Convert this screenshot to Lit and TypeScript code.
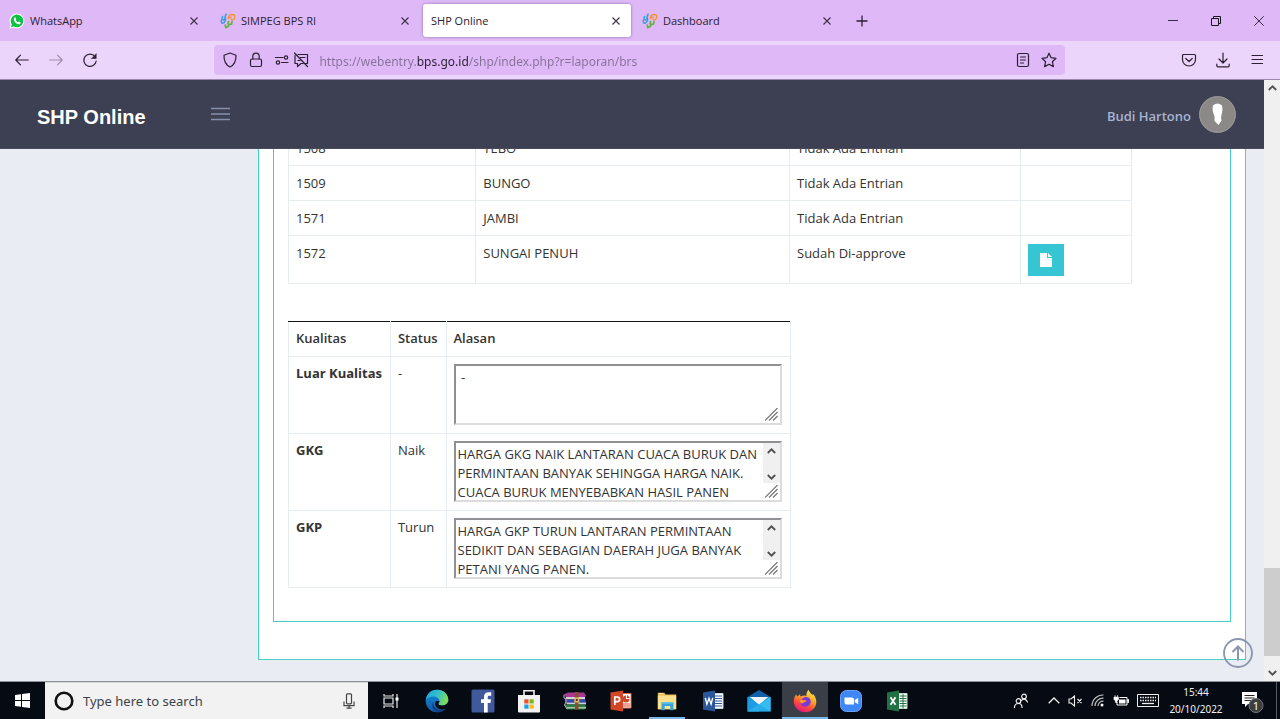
import { LitElement, html, css, svg, nothing } from "lit";
import { customElement } from "lit/decorators.js";
import { classMap } from "lit/directives/class-map.js";

const bpsIcon = html`<svg class="fav" viewBox="0 0 16 16" aria-hidden="true" fill="none" stroke-linecap="round">
  <path d="M2.600 3.500L1.200 8.500Q1.500 11 3.800 9.800Q6 8 5.500 5.500" stroke="#2f9fe0" stroke-width="1.500"/>
  <path d="M5 4.500L6 1.200M3.500 7L5 6" stroke="#2f9fe0" stroke-width="1.600"/>
  <path d="M8.500 5.500L9.300 2.300Q12 .8 14.200 2Q15.500 4 13.800 6.300Q12 8 11 6" stroke="#f5943a" stroke-width="1.500"/>
  <path d="M8.500 4Q10 5 11.500 4" stroke="#f5943a" stroke-width="1.300"/>
  <path d="M5.200 12L5.800 14.600L8 13.500L9.500 11.500L11.500 11L12 8.500M8.500 8.500L8 11" stroke="#62b33e" stroke-width="1.700"/>
</svg>`;

const whatsIcon = html`<svg class="fav" viewBox="0 0 16 16" aria-hidden="true">
  <path d="M8 .5a7.400 7.400 0 1 1-3.500 14L.6 15.600l1.100-3.900A7.400 7.400 0 0 1 8 .5z" fill="#fff"/>
  <path d="M8 1.500a6.400 6.400 0 1 1-3.200 12L2 14.200l.8-2.800A6.400 6.400 0 0 1 8 1.500z" fill="#0dc143"/>
  <path d="M5.600 4.500c.5-.3.900-.1 1.100.4l.5 1.200c0 .4-.6.700-.6 1 .5 1 1.200 1.700 2.300 2.200.4 0 .7-.8 1.100-.8l1.500.8c.3.400 0 1.300-.5 1.600-1.200.8-3 .1-4.400-1.200C5 8.200 4 6 5.600 4.500z" fill="#fff"/>
</svg>`;

const closeIcon = html`<svg width="8" height="8" viewBox="0 0 8 8" aria-hidden="true"><path d="M.5.5l7 7M7.500.5l-7 7" stroke="#3c3046" stroke-width="1.100"/></svg>`;

const line = (body: unknown, size = 16, cls = "") => html`<svg class=${cls} width=${size} height=${size} viewBox="0 0 16 16" fill="none"
  stroke="currentColor" stroke-width="1.200" stroke-linecap="round" stroke-linejoin="round" aria-hidden="true">${body}</svg>`;

const app24 = (body: unknown) => html`<svg width="24" height="24" viewBox="0 0 24 24" aria-hidden="true">${body}</svg>`;

const arrowUp = html`<svg width="9" height="6" viewBox="0 0 9 6" aria-hidden="true"><path d="M.8 5L4.500 1.300 8.200 5" fill="none" stroke="#505050" stroke-width="1.800"/></svg>`;
const arrowDown = html`<svg width="9" height="6" viewBox="0 0 9 6" aria-hidden="true"><path d="M.8 1L4.500 4.700 8.200 1" fill="none" stroke="#505050" stroke-width="1.800"/></svg>`;

@customElement("browser-bar")
export class BrowserBar extends LitElement {
  static styles = css`
    :host { display: block; font: 12px "Noto Sans", sans-serif; color: #2b2033; }
    button { border: 0; background: none; padding: 0; color: inherit; display: grid; place-items: center; font: inherit; }
    svg { display: block; }
    .strip { display: flex; height: 41px; background: #dfb9f7; }
    .tab { flex: 0 1 211px; min-width: 0; box-sizing: border-box; display: flex; align-items: center; gap: 5px; padding: 0 13px 0 9px; }
    .tab a { flex: 1; min-width: 0; color: inherit; text-decoration: none; display: flex; align-items: center; gap: 5px; white-space: nowrap; overflow: hidden; font: 11px "Open Sans", sans-serif; }
    .fav { width: 16px; height: 16px; flex: none; }
    .tab button { width: 9px; height: 16px; }
    .active { flex-basis: 208px; margin: 4px 2px 4px 1px; padding: 0 11px 0 8px; background: #fff; border-radius: 3px; box-shadow: 0 0 3px #8d6fa3; }
    .plus { width: 34px; margin-left: 1px; }
    .window { margin-left: auto; display: flex; }
    .window button { width: 43px; }
    .tools { display: flex; align-items: center; height: 39px; padding: 0 11px 0 10px; gap: 10px; background: #ecd5fa; border-bottom: 1px solid #9b86ad; box-sizing: border-box; }
    .tools > button { width: 24px; height: 24px; flex: none; }
    .dim { color: #a08cae; }
    .gap { flex: 94 1 0; }
    .url { flex: 848 1 0; display: flex; align-items: center; height: 30px; border-radius: 4px; background: #dfb9f7; padding: 0 8px; box-sizing: border-box; }
    .url button { width: 16px; height: 20px; flex: none; }
    .lock { margin-left: 10px; }
    .perm { margin-left: 10px; }
    .chat { margin-left: 3px; }
    .star { margin-left: 10px; }
    input { flex: 1; min-width: 0; border: 0; outline: 0; padding: 2px 0 0; margin: 0 10px; height: 20px; box-sizing: border-box; font: 12px "Noto Sans", sans-serif; color: #2b2033;
      background: linear-gradient(to right, #86709a 98px, #2b2033 98px 150px, #86709a 150px);
      -webkit-background-clip: text; background-clip: text; -webkit-text-fill-color: transparent; }
  `;
  tab(label: string, icon: unknown, active = false) {
    return html`<div class=${classMap({ tab: true, active })}>
      <a href="#">${icon}<span>${label}</span></a>
      <button aria-label="Close ${label}">${closeIcon}</button>
    </div>`;
  }
  render() {
    return html`
      <div class="strip">
        ${this.tab("WhatsApp", whatsIcon)} ${this.tab("SIMPEG BPS RI", bpsIcon)}
        ${this.tab("SHP Online", nothing, true)} ${this.tab("Dashboard", bpsIcon)}
        <button class="plus" aria-label="New tab"><svg width="12" height="12" viewBox="0 0 12 12"><path d="M6 .5v11M.5 6h11" stroke="#2b2033" stroke-width="1.300"/></svg></button>
        <div class="window">
          <button aria-label="Minimize"><svg width="10" height="10" viewBox="0 0 10 10"><path d="M0 4.500h10" stroke="#3a2c45"/></svg></button>
          <button aria-label="Restore"><svg width="10" height="10" viewBox="0 0 10 10" fill="none" stroke="#1c1422"><path d="M.5 2.500h7v7h-7zM2.500 2.500v-2h7v7h-2"/></svg></button>
          <button aria-label="Close"><svg width="10" height="10" viewBox="0 0 10 10"><path d="M.3.3l9.400 9.400M9.700.3L.3 9.700" stroke="#3a2c45"/></svg></button>
        </div>
      </div>
      <div class="tools">
        <button aria-label="Back">${line(svg`<path d="M14.200 8H2M6.500 3.200L1.800 8l4.700 4.800"/>`)}</button>
        <button class="dim" aria-label="Forward">${line(svg`<path d="M1.800 8H14M9.500 3.200L14.200 8l-4.700 4.800"/>`)}</button>
        <button aria-label="Reload">${line(svg`<path d="M13 4.500A6.200 6.200 0 1 0 14.200 9"/><path d="M14.200 2v4.500H9.700z" fill="currentColor" stroke-width=".6"/>`)}</button>
        <span class="gap"></span>
        <div class="url">
          <button aria-label="Tracking protection">${line(svg`<path d="M8 1L14 3.200C14.200 9 12 13 8 15C4 13 1.800 9 2 3.200z"/>`)}</button>
          <button class="lock" aria-label="Site information">${line(svg`<rect x="2.500" y="7" width="11" height="7.500" rx="1.500"/><path d="M4.800 7V4.300a3.200 3.200 0 0 1 6.400 0V7"/>`)}</button>
          <button class="perm" aria-label="Permissions">${line(svg`<path d="M1.500 5.500H9M7.500 10.500H14"/><circle cx="12" cy="5.500" r="1.700"/><circle cx="4" cy="10.500" r="1.700"/>`)}</button>
          <button class="chat" aria-label="Notifications blocked">${line(svg`<path d="M5 2.500H14.500V11.500H12.500M10 11.500H8L4.500 14.500V11.500H2V3.500M7.500 5.500H12M5 8.500H7M1.500 1L14.500 14.500"/>`)}</button>
          <input aria-label="Address" value="https://webentry.bps.go.id/shp/index.php?r=laporan/brs">
          <button aria-label="Reader view">${line(svg`<rect x="2.500" y="1.500" width="11" height="13" rx="1.500"/><path d="M5.500 5h5M5.500 8h5M5.500 11h3"/>`)}</button>
          <button class="star" aria-label="Bookmark">${line(svg`<path d="M8 1.200l2.100 4.500 4.900.6-3.600 3.400 1 4.900L8 12.200l-4.400 2.400 1-4.900L1 6.300l4.900-.6z"/>`)}</button>
        </div>
        <span class="gap"></span>
        <button aria-label="Pocket">${line(svg`<path d="M2.500 2.500h11a1 1 0 0 1 1 1V7.500a6.500 6.500 0 0 1-13 0V3.500a1 1 0 0 1 1-1zM4.800 6.500L8 9.500l3.200-3"/>`)}</button>
        <button aria-label="Downloads">${line(svg`<path d="M8 1v9.500M4 7l4 4 4-4M1.800 12v1.500a1.300 1.300 0 0 0 1.300 1.300h9.800a1.300 1.300 0 0 0 1.300-1.300V12"/>`)}</button>
        <button aria-label="Menu">${line(svg`<path d="M3 3.500h10.500M3 7.500h10.500M3 11.500h10.500"/>`)}</button>
      </div>`;
  }
}

interface Region { code: string; name: string; status: string; file?: boolean; }
interface Quality { name: string; status: string; reason: string; scroll: boolean; }

const regions: Region[] = [
  { code: "1508", name: "TEBO", status: "Tidak Ada Entrian" },
  { code: "1509", name: "BUNGO", status: "Tidak Ada Entrian" },
  { code: "1571", name: "JAMBI", status: "Tidak Ada Entrian" },
  { code: "1572", name: "SUNGAI PENUH", status: "Sudah Di-approve", file: true },
];

const qualities: Quality[] = [
  { name: "Luar Kualitas", status: "-", reason: " -", scroll: false },
  { name: "GKG", status: "Naik", reason: "HARGA GKG NAIK LANTARAN CUACA BURUK DAN PERMINTAAN BANYAK SEHINGGA HARGA NAIK. CUACA BURUK MENYEBABKAN HASIL PANEN", scroll: true },
  { name: "GKP", status: "Turun", reason: "HARGA GKP TURUN LANTARAN PERMINTAAN SEDIKIT DAN SEBAGIAN DAERAH JUGA BANYAK PETANI YANG PANEN.", scroll: true },
];

@customElement("shp-page")
export class ShpPage extends LitElement {
  static styles = css`
    :host { display: flex; min-height: 0; background: #e9ecf3; font: 13px/19px "Open Sans", sans-serif; color: #333; }
    svg { display: block; }
    button { border: 0; padding: 0; display: grid; place-items: center; background: none; }
    .page { flex: 1; min-width: 0; display: flex; flex-direction: column; position: relative; }
    .head { flex: none; height: 69px; box-sizing: border-box; display: flex; align-items: center; padding: 0 28px 0 37px; background: #3d3f52; border-bottom: 1px solid #4a4b5a; }
    .brand { width: 174px; color: #fff; text-decoration: none; font: bold 20px/24px "Liberation Sans", sans-serif; padding-top: 6px; box-sizing: border-box; }
    .user { margin-left: auto; display: flex; align-items: center; gap: 8px; color: #a9b3cf; text-decoration: none; font-weight: 600; }
    .name { padding-top: 4px; }
    .main { flex: 1; min-height: 0; overflow: hidden; display: flex; flex-direction: column; justify-content: flex-end; padding: 0 18px 21px 258px; }
    .outer { flex: none; background: #fff; border: 1px solid #44d0c3; padding: 14px 14px 37px; }
    .inner { border: 1px solid #44d0c3; padding: 14px 14px 33px; }
    table { border-collapse: collapse; }
    td, th { border: 1px solid #e7ecf1; padding: 7px 8px 8px 7px; text-align: left; vertical-align: top; }
    .regions { width: 91%; table-layout: fixed; margin-bottom: 37px; }
    .regions td { padding: 8px 7px 7px; }
    .c1 { width: 22.2%; }
    .c2 { width: 37.2%; }
    .c3 { width: 27.4%; }
    .file { width: 36px; height: 32px; background: #36c6d3; }
    .reasons thead th { border-top-color: #111; font-weight: 600; }
    .box { display: flex; width: 328px; height: 61px; box-sizing: border-box; border: 2px solid; border-color: #8f8f94 #dcdcdc #dcdcdc #8f8f94; }
    textarea { flex: 1; min-width: 0; border: 0; outline: 0; padding: 2px 0 0 2px; resize: none; overflow: hidden; background: none; font: inherit; color: #333; }
    .rail { width: 17px; display: flex; flex-direction: column; justify-content: flex-end; }
    .track { flex: 1; background: #f0f0f0; display: flex; flex-direction: column; justify-content: space-between; align-items: center; padding: 5px 0 3px; }
    .grip { height: 17px; display: grid; place-items: center; }
    .top { position: absolute; right: 11px; bottom: 13px; }
    .bar { flex: none; width: 16px; background: #f0f0f0; display: flex; flex-direction: column; align-items: center; }
    .bar button { height: 16px; width: 16px; }
    .before { flex: 472; }
    .thumb { flex: 88; width: 16px; background: #cdcdcd; }
    .after { flex: 9; }
  `;
  render() {
    return html`
      <div class="page">
        <header class="head">
          <a class="brand" href="#">SHP Online</a>
          <button aria-label="Toggle menu"><svg width="19" height="14" viewBox="0 0 19 14"><path d="M0 1.500h19M0 7h19M0 12.500h19" stroke="#8790aa" stroke-width="1.500"/></svg></button>
          <a class="user" href="#"><span class="name">Budi Hartono</span>
            <svg width="37" height="37" viewBox="0 0 37 37" aria-hidden="true"><circle cx="18.500" cy="18.500" r="18.300" fill="#8a8987"/><circle cx="18.500" cy="18.500" r="17.800" fill="none" stroke="#9b9a99"/>
              <path d="M14 9.500Q18.500 5.500 23 9.500Q24.300 14 22.500 19L22 22L22.600 24.500L19.500 29L15.500 25L15.600 20.500Q12.700 14 14 9.500z" fill="#fff"/></svg>
          </a>
        </header>
        <main class="main">
          <section class="outer"><div class="inner">
            <table class="regions">
              <colgroup><col class="c1"><col class="c2"><col class="c3"><col></colgroup>
              <tbody>${regions.map((r) => html`<tr><td>${r.code}</td><td>${r.name}</td><td>${r.status}</td><td>${r.file
                ? html`<button class="file" aria-label="Open file"><svg width="12" height="14" viewBox="0 0 12 14"><path d="M0 0H7V5H12V14H0zM8 0L12 4H8z" fill="#fff"/></svg></button>` : nothing}</td></tr>`)}</tbody>
            </table>
            <table class="reasons">
              <thead><tr><th>Kualitas</th><th>Status</th><th>Alasan</th></tr></thead>
              <tbody>${qualities.map((q) => html`<tr><th>${q.name}</th><td>${q.status}</td><td>
                <div class="box">
                  <textarea aria-label="Alasan ${q.name}" .value=${q.reason}></textarea>
                  <div class="rail">
                    ${q.scroll ? html`<div class="track">${arrowUp}${arrowDown}</div>` : nothing}
                    <div class="grip"><svg width="13" height="13" viewBox="0 0 13 13"><path d="M0 12.500L12.500 0M4 12.500L12.500 4M8 12.500L12.500 8" stroke="#777" stroke-width="1.200"/></svg></div>
                  </div>
                </div></td></tr>`)}</tbody>
            </table>
          </div></section>
        </main>
        <button class="top" aria-label="Back to top"><svg width="30" height="30" viewBox="0 0 30 30" fill="none" stroke="#8a96ae"><circle cx="15" cy="15" r="14" stroke-width="1.800"/><path d="M15 22.500V9M9.500 14l5.500-5.500 5.500 5.500" stroke-width="2"/></svg></button>
      </div>
      <div class="bar">
        <button aria-label="Scroll up">${arrowUp}</button><span class="before"></span><span class="thumb"></span><span class="after"></span>
        <button aria-label="Scroll down">${arrowDown}</button>
      </div>`;
  }
}

const apps: { label: string; icon: unknown; state?: string }[] = [
  { label: "Task view", icon: html`<svg width="16" height="16" viewBox="0 0 16 16" fill="none" stroke="#e8e8e8" stroke-width="1.200"><path d="M1 1v2h9V1M1 5h9v6H1zM1 15v-2h9v2M14 1v14"/><path d="M12.500 4.500h3v3h-3z" fill="#fff" stroke="none"/></svg>` },
  { label: "Edge", icon: app24(svg`<defs><linearGradient id="e1" x1="0" y1="0" x2="1" y2=".3"><stop offset="0" stop-color="#1ca4dc"/><stop offset=".6" stop-color="#35c1c8"/><stop offset="1" stop-color="#7bdc5a"/></linearGradient><linearGradient id="e2" x1="0" y1="0" x2="0" y2="1"><stop offset="0" stop-color="#1b8fd8"/><stop offset="1" stop-color="#0c5aa8"/></linearGradient></defs>
    <circle cx="12" cy="12" r="11.300" fill="url(#e2)"/><path d="M.9 11C1.500 4.500 6.500.7 12 .7 19 .7 23.300 5.500 23.300 10.500 23.300 14.500 20 16.500 17 16.500 14.500 16.500 13.300 15.700 13.300 15c0-.8 1.200-1.200 1.200-3 0-2-2.200-4.500-6-4.500C5 7.500 2 9 .9 11z" fill="url(#e1)"/><path d="M8.500 12.500c-1 3.500 1.500 8 6.500 8.300 3 .2 5.500-1 7-2.800-1.500 3-5 5.300-9 5.300C7 22.500 6 15.500 8.500 12.500z" fill="#123f83"/><path d="M14.500 12c0 1.800-1.200 2.200-1.200 3 0 .7 1.200 1.500 3.700 1.500 3 0 5.500-1.500 6.300-4V18c-1.500 2-5 2.800-8 2.300-4.500-.8-6-5-4.500-8z" fill="#070c14"/>`) },
  { label: "Facebook", icon: app24(svg`<rect x=".5" y=".5" width="23" height="23" rx="1.500" fill="#40599b"/><path d="M13 23.500V14h-3v-3.800h3V8c0-3.200 1.800-4.700 4.700-4.700h2.500v3.500h-1.900c-1.300 0-1.600.6-1.600 1.700v1.700H20l-.5 3.800h-2.800v9.500z" fill="#fff"/>`) },
  { label: "Store", icon: app24(svg`<path d="M7 6V1.700h10V6" fill="none" stroke="#f2f2f2" stroke-width="1.600"/><path d="M1 6h22v16.500a1 1 0 0 1-1 1H2a1 1 0 0 1-1-1z" fill="#f2f2f2"/><path d="M7.300 10.300h4.200v4.200H7.300z" fill="#e9522b"/><path d="M12.500 10.300h4.200v4.200h-4.200z" fill="#7ab51d"/><path d="M7.300 15.500h4.200v4.200H7.300z" fill="#1ba1e2"/><path d="M12.500 15.500h4.200v4.200h-4.200z" fill="#fbb81b"/>`) },
  { label: "WinRAR", icon: app24(svg`<path d="M.5 5.500L5 3.500h16l2 3-1 1.500H3z" fill="#a9388f"/><path d="M3 8h19v2.500H4L2.500 9z" fill="#d9cfe0"/><path d="M1 10.500h21l1.500 3H3z" fill="#3449b0"/><path d="M3 13.500h20V15.500H4z" fill="#c8cfe0"/><path d="M1.500 15.500H22l1.500 3-2 2H4z" fill="#2b7d40"/><path d="M4 18h19v1.500H4z" fill="#a9c4a9"/><path d="M1 6v3l2 1v3l-1.500 3 2.500 4" fill="none" stroke="#cbb3c7"/><path d="M12 3h3.500v17.500H12z" fill="#8a4f2a"/><path d="M11.300 8.500h5v5h-5z" fill="#dcbd62"/><path d="M12.800 10h2v2h-2z" fill="#5a3518"/>`) },
  { label: "PowerPoint", icon: app24(svg`<path d="M13 4.500h9v14.500h-9z" fill="#fff" stroke="#e36a4c"/><path d="M17 6.500a3.500 3.500 0 1 0 3.500 3.500H17z" fill="#d24726"/><path d="M18 5.800V9h3.200" fill="#d24726"/><path d="M14 15h7M14 17h7" stroke="#d24726"/><path d="M1.500 3.500L14 1.500v21L1.500 20.500z" fill="#d24726"/><path d="M5.800 16v-8h2.500a2.300 2.300 0 0 1 0 4.700H5.800" fill="none" stroke="#fff" stroke-width="1.700"/>`) },
  { label: "File Explorer", state: "open", icon: html`<svg width="22" height="22" viewBox="0 0 24 24" aria-hidden="true"><path d="M2 3h7l1.500 2H22v16H2z" fill="#e9b94d"/><path d="M2 6h20v15H2z" fill="#fbe08e"/><path d="M3 4h5" stroke="#fff1be"/><path d="M6 13.500h13V22h-3.500v-4.500h-6V22H6z" fill="#35a6dd"/><path d="M6 13.500h13v1.500H6z" fill="#5bc0ea"/></svg>` },
  { label: "Word", icon: app24(svg`<path d="M13 4.500h9v15h-9z" fill="#fff" stroke="#c5d3e8"/><path d="M14 7h7M14 9.500h7M14 12h7M14 14.500h7M14 17h7" stroke="#2b579a"/><path d="M2 3.500L14 1.500v21L2 20.500z" fill="#2b579a"/><path d="M4.300 8.800l1.600 6.400L8 9.300l2.100 5.900 1.600-6.400" fill="none" stroke="#fff" stroke-width="1.400"/>`) },
  { label: "Mail", icon: app24(svg`<path d="M.5 8L12 1l11.500 7z" fill="#1061a8"/><path d="M.5 8h23v14.500H.5z" fill="#1794dc"/><path d="M3 8h18l-9 8z" fill="#f1f4f6"/><path d="M.5 8L12 15.500V22.500H.5z" fill="#1d9ce4"/><path d="M12 15.500L23.500 8v14.500z" fill="#36bdf0"/><path d="M.5 22.500L23.500 8v14.500z" fill="#36bdf0" opacity=".55"/><path d="M3 8h18l-9 6.500z" fill="#f1f4f6"/>`) },
  { label: "Firefox", state: "current", icon: app24(svg`<defs><linearGradient id="f1" x1=".8" y1="0" x2=".3" y2="1"><stop offset="0" stop-color="#fff04a"/><stop offset=".4" stop-color="#ffa52a"/><stop offset=".7" stop-color="#ff4a3d"/><stop offset="1" stop-color="#e2128a"/></linearGradient></defs>
    <path d="M3 5.500l1.500 2L7 5.200l.5 2.300C10 6.500 12 6 13.500 7 13 4.500 14 2.500 15.500.7c.5 2 2.500 3.300 3.800 5.300L20 5c2.500 2.500 3.300 5.500 3.300 8 0 5.500-4.800 10.200-11 10.200S1 18.500.8 13C.7 10 1.500 7.500 3 5.500z" fill="url(#f1)"/><path d="M7.500 10.500c2-.5 3.500-3 6.500-2.500 2.500.5 4 2.700 3.700 5-.3 3-2.700 4.700-5.500 4.700S7.500 16 7 13.500c1.500 1.300 3 .8 4-.3 1-1 2.300-.7 2.500-1-1-1.700-3.500-.5-4-1.500z" fill="#7a3ad8"/><path d="M7 13.500C8.500 15 10 14 11 13.200c1-1 2.300-.7 2.500-1C12 11 10 11.500 7.500 10.500z" fill="#ff9a25"/>`) },
  { label: "Zoom", icon: app24(svg`<rect x="1.500" y="1.500" width="21" height="21" rx="6" fill="#3f86f7" stroke="#6aa2f8"/><path d="M5.500 8.500h7.500a2 2 0 0 1 2 2v5H7.500a2 2 0 0 1-2-2zM15.800 11l3.400-2.200v6.500L15.800 13.200z" fill="#fff"/>`) },
  { label: "Excel", icon: app24(svg`<path d="M13 4.500h9v15h-9z" fill="#fff" stroke="#c0dccb"/><path d="M14.500 7h7M14.500 9.500h7M14.500 12h7M14.500 14.500h7M14.500 17h7M18 5v14.500" stroke="#207245"/><path d="M2 3.500L14 1.500v21L2 20.500z" fill="#207245"/><path d="M5.500 8.200l5 7.600M10.500 8.200l-5 7.600" stroke="#fff" stroke-width="1.800"/>`) },
];

@customElement("task-bar")
export class TaskBar extends LitElement {
  static styles = css`
    :host { display: flex; height: 38px; box-sizing: border-box; border-top: 1px solid #8b919b; background: #060b13; color: #f0f0f0; font: 12px/17px "Noto Sans", sans-serif; }
    svg { display: block; flex: none; }
    button { border: 0; padding: 0; background: none; color: inherit; display: grid; place-items: center; font: inherit; flex: none; }
    .start { width: 45px; }
    .search { flex: 0 1 323px; min-width: 150px; box-sizing: border-box; display: flex; align-items: center; padding: 0 13px 0 9px; gap: 9px; background: #f2f2f2; border-top: 1px solid #d5d8da; }
    input { flex: 1; min-width: 0; border: 0; outline: 0; padding: 0; background: none; font: 13px/20px "Noto Sans", sans-serif; }
    input::placeholder { color: #3d4248; opacity: 1; }
    .app { width: 46px; box-sizing: border-box; }
    .open, .current { border-bottom: 2px solid #76b9ed; padding-top: 2px; }
    .open { width: 36px; margin: 0 5px; }
    .current { background: #3a3f47; }
    .tray { margin-left: auto; display: flex; align-items: center; }
    .people { margin-right: 19px; }
    .t { margin-right: 8px; }
    .clock { text-align: center; width: 58px; font-size: 10px; margin: 0 15px 0 8px; }
    .note { margin-right: 12px; }
    .edge { width: 1px; align-self: stretch; background: #555b63; margin-right: 3px; }
  `;
  render() {
    return html`
      <button class="start" aria-label="Start"><svg width="15" height="15" viewBox="0 0 15 15"><path d="M0 2L6 1.200V7H0zM7 1L15 0V7H7zM0 8H6V13.800L0 13zM7 8H15V15L7 14z" fill="#fff"/></svg></button>
      <label class="search">
        <svg width="20" height="20" viewBox="0 0 20 20" aria-hidden="true"><circle cx="10" cy="10" r="8.300" fill="none" stroke="#111" stroke-width="2.600"/></svg>
        <input type="text" placeholder="Type here to search" aria-label="Search">
        <svg width="12" height="16" viewBox="0 0 12 16" fill="none" stroke="#444" stroke-width="1.200" aria-hidden="true"><rect x="3.500" y=".8" width="5" height="10" rx="1"/><path d="M1 8.500v4.200h10V8.500M6 12.700v2.500M3.500 15.200h5"/></svg>
      </label>
      ${apps.map((a) => html`<button class="app ${a.state ?? ""}" aria-label=${a.label}>${a.icon}</button>`)}
      <div class="tray">
        <button class="people" aria-label="People">${line(svg`<circle cx="5.500" cy="8" r="2.300"/><path d="M1.500 14.500C1.500 12 3.500 10.500 5.500 10.500S9 12 9 14.500"/><circle cx="11" cy="3.500" r="2.300"/><path d="M8.500 7.500C9.500 6 12.500 5 14.500 9"/>`)}</button>
        <button class="t" aria-label="Hidden icons"><svg width="12" height="7" viewBox="0 0 12 7"><path d="M.7 6.200L6 1l5.300 5.200" fill="none" stroke="#eee" stroke-width="1.300"/></svg></button>
        <button class="t" aria-label="Sound muted"><svg width="15" height="12" viewBox="0 0 15 12" fill="none" stroke="#eee" stroke-width="1.100"><path d="M1 4v4h2l3.500 3V1L3 4zM9.500 4l4 4M13.500 4l-4 4"/></svg></button>
        <button class="t" aria-label="Network"><svg width="14" height="13" viewBox="0 0 14 13" fill="none" stroke="#bbb" stroke-width="1.200"><path d="M1 12A11 11 0 0 1 12.500 1M4 12A8 8 0 0 1 12.500 4.200M7 12A5 5 0 0 1 12.500 7.200"/><circle cx="11" cy="11" r="1.500" fill="#fff" stroke="none"/></svg></button>
        <button class="t" aria-label="Battery"><svg width="16" height="12" viewBox="0 0 16 12"><path d="M6.500 2.500h7.500v7.500H4v-3" fill="none" stroke="#fff"/><path d="M6 4.500H12.500v4H6z" fill="#fff"/><path d="M14.500 4.500H16v3h-1.500zM1 2h4.500v2.500L4 6v1.500H2.500V6L1 4.500zM2 0v2M4.500 0v2" fill="#fff" stroke="#fff" stroke-width=".6"/></svg></button>
        <button aria-label="Keyboard"><svg width="22" height="13" viewBox="0 0 22 13" fill="none" stroke="#eee"><path d="M.5.5h21v12H.5z"/><path d="M3 3.500h16M3 6.500h16" stroke-width="1.500" stroke-dasharray="1.500 1"/><path d="M5 9.500h12" stroke-width="1.300"/></svg></button>
        <div class="clock"><div>15:44</div><div>20/10/2022</div></div>
        <button class="note" aria-label="Notifications, 1 new"><svg width="24" height="24" viewBox="0 0 24 24"><path d="M2 3h15v12H8l-3 3v-3H2z" fill="#fff"/><path d="M4.500 6.500h10M4.500 9h10M4.500 11.500h7" stroke="#222" stroke-width="1.200"/><circle cx="16" cy="16.500" r="7" fill="#3a3d42" stroke="#777"/><text x="16" y="20.500" fill="#fff" font-size="11" text-anchor="middle">1</text></svg></button>
        <span class="edge"></span>
      </div>`;
  }
}

@customElement("app-root")
export class AppRoot extends LitElement {
  static styles = css`
    :host { display: grid; grid-template-rows: auto minmax(0, 1fr) auto; height: 100vh; overflow: hidden; }
  `;
  render() {
    return html`<browser-bar></browser-bar><shp-page></shp-page><task-bar></task-bar>`;
  }
}
